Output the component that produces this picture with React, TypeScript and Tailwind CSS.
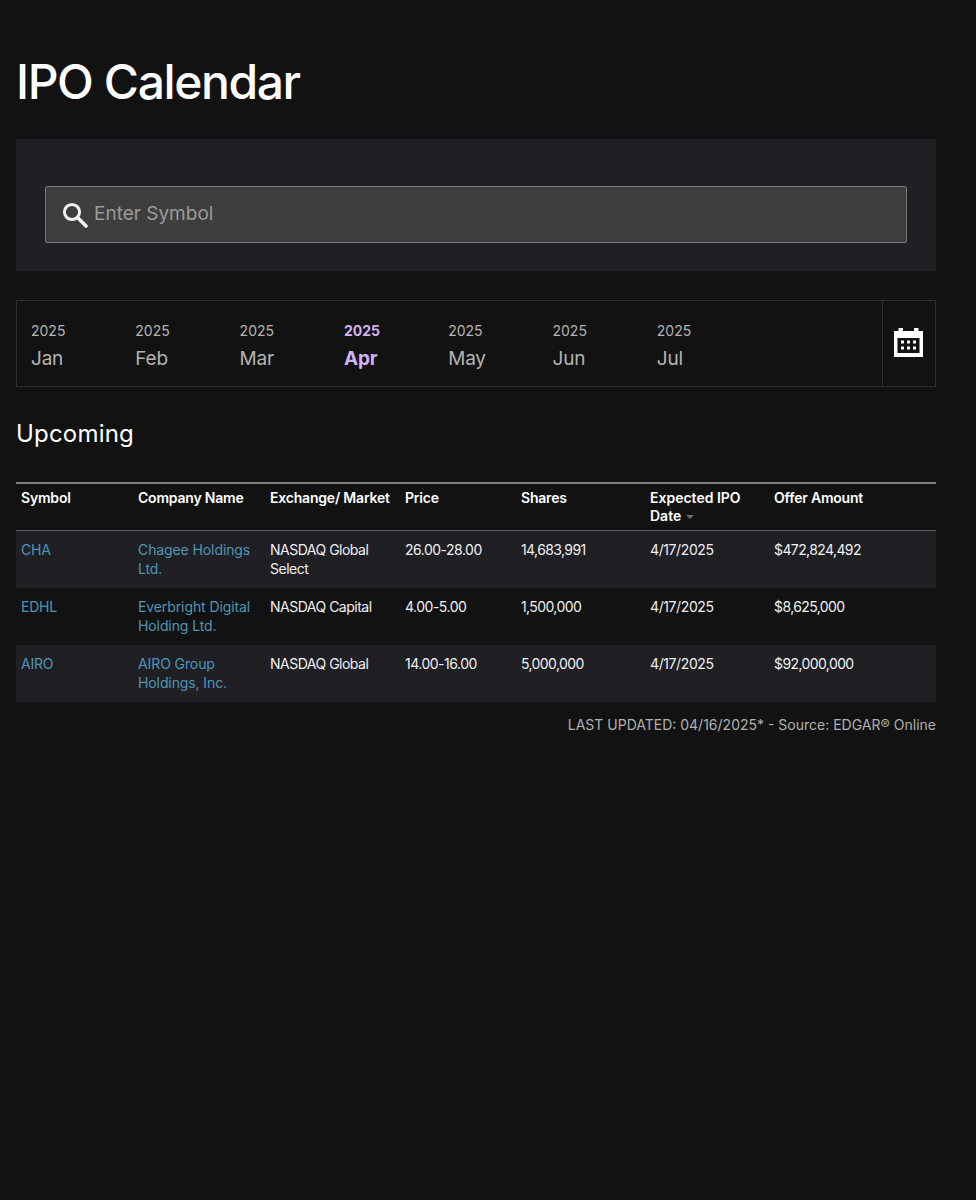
const months = ["Jan", "Feb", "Mar", "Apr", "May", "Jun", "Jul"];

const rows = [
  { symbol: "CHA", company: "Chagee Holdings Ltd.", market: "NASDAQ Global Select", price: "26.00-28.00", shares: "14,683,991", date: "4/17/2025", amount: "$472,824,492" },
  { symbol: "EDHL", company: "Everbright Digital Holding Ltd.", market: "NASDAQ Capital", price: "4.00-5.00", shares: "1,500,000", date: "4/17/2025", amount: "$8,625,000" },
  { symbol: "AIRO", company: "AIRO Group Holdings, Inc.", market: "NASDAQ Global", price: "14.00-16.00", shares: "5,000,000", date: "4/17/2025", amount: "$92,000,000" },
];

function SearchIcon() {
  return (
    <svg width="26" height="26" viewBox="0 0 26 26" fill="none" stroke="#f0f0f0" className="shrink-0">
      <circle cx="10" cy="10" r="7.6" strokeWidth="3" />
      <path d="M15.5 15.5l8.5 8.5" strokeWidth="3.6" strokeLinecap="round" />
    </svg>
  );
}

function CalendarIcon() {
  return (
    <svg width="29" height="29" viewBox="0 0 29 29">
      <path fill="#fff" fillRule="evenodd" d="M0 3h4.500V0h4.500v3h11V0h4.500v3H29v26H0zM3.500 10v15h22V10z" />
      <g fill="#fff">
        <rect x="7" y="12.500" width="3" height="3" />
        <rect x="13" y="12.500" width="3" height="3" />
        <rect x="19" y="12.500" width="3" height="3" />
        <rect x="7" y="18.500" width="3" height="3" />
        <rect x="13" y="18.500" width="3" height="3" />
        <rect x="19" y="18.500" width="3" height="3" />
      </g>
    </svg>
  );
}

export default function App() {
  return (
    <div className="min-h-[1200px] bg-[#121212] pl-4 pr-10 pt-[52px] font-['Inter',sans-serif] text-white">
      <h1 className="text-[48px] leading-[60px] font-medium tracking-[-1.4px]">IPO Calendar</h1>

      <section className="mt-[27px] h-[132px] bg-[#1f1f24] px-[29px] pt-[47px]">
        <div className="flex h-[57px] items-center gap-[6px] rounded-[2px] border border-[#7a7a7a] bg-[#3e3e3e] pl-[16px]">
          <SearchIcon />
          <span className="text-[19px] text-[#9a9a9a]">Enter Symbol</span>
        </div>
      </section>

      <nav className="mt-[29px] flex h-[87px] border border-[#2f2f2f]">
        <div className="flex flex-1 pl-[14px] pt-[20px]">
          {months.map((month) => {
            const active = month === "Apr";
            return (
              <div key={month} className={`w-[104.3px] ${active ? "font-bold text-[#d4b0f5]" : "text-[#b4b4b4]"}`}>
                <div className="text-[14px] leading-[20px]">2025</div>
                <div className="mt-[4px] text-[19px] leading-[28px] tracking-[-0.2px]">{month}</div>
              </div>
            );
          })}
        </div>
        <div className="flex w-[53px] justify-center border-l border-[#2f2f2f] pr-[1px] pt-[27px]">
          <CalendarIcon />
        </div>
      </nav>

      <h2 className="mt-[31px] text-[24px] leading-[32px] font-normal tracking-[0.2px]">Upcoming</h2>

      <table className="mt-[32px] w-full table-fixed border-separate border-spacing-0 text-left text-[14px] leading-[19px] tracking-[-0.2px]">
        <thead>
          <tr className="align-top [&>th]:h-[49px] [&>th]:border-t-2 [&>th]:border-b [&>th]:border-t-[#7f7f7f] [&>th]:border-b-[#5f5f5f] [&>th]:px-[5px] [&>th]:pt-[4px] [&>th]:font-semibold">
            <th className="w-[117px]">Symbol</th>
            <th className="w-[132px]">Company Name</th>
            <th className="w-[135px]">Exchange/ Market</th>
            <th className="w-[116px]">Price</th>
            <th className="w-[129px]">Shares</th>
            <th className="w-[124px] tracking-normal">
              <span className="block">Expected IPO</span>
              <span className="-mt-[1px] block">
                Date
                <span className="ml-[5px] inline-block border-x-[4px] border-t-[4px] border-x-transparent border-t-[#6a6a6a] align-middle" />
              </span>
            </th>
            <th>Offer Amount</th>
          </tr>
        </thead>
        <tbody>
          {rows.map((row, i) => (
            <tr key={row.symbol} className={`h-[57px] align-top text-[#f0f0f0] [&>td]:px-[5px] [&>td]:pt-[9px] ${i % 2 === 0 ? "bg-[#1f1f24]" : ""}`}>
              <td className="text-[#4f96b8]">{row.symbol}</td>
              <td className="tracking-[-0.1px] text-[#4f96b8]">{row.company}</td>
              <td className="tracking-[-0.5px]">{row.market}</td>
              <td className="tracking-[-0.5px]">{row.price}</td>
              <td className="tracking-[-0.6px]">{row.shares}</td>
              <td className="tracking-[-0.4px]">{row.date}</td>
              <td className="tracking-[-0.6px]">{row.amount}</td>
            </tr>
          ))}
        </tbody>
      </table>

      <p className="mt-[13px] text-right text-[14px] leading-[20px] text-[#b0b0b0]">
        LAST UPDATED: 04/16/2025* - Source: EDGAR® Online
      </p>
    </div>
  );
}
